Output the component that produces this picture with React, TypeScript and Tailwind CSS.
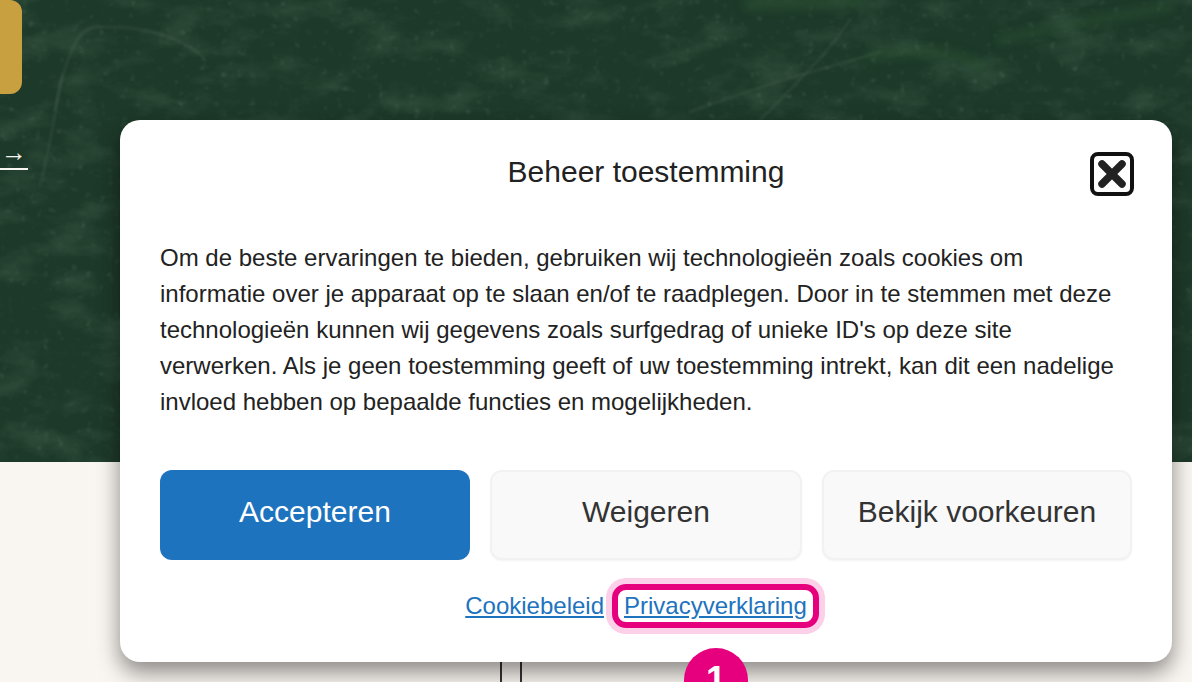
export default function App() {
  return (
    <div className="relative h-[682px] w-full overflow-hidden bg-[#f9f5f0] font-['Liberation_Sans',Arial,sans-serif]">
      {/* hero */}
      <section className="relative h-[462px] overflow-hidden bg-[#1d3929]">
        <svg className="absolute inset-0 h-full w-full" viewBox="0 0 1192 462" preserveAspectRatio="none" aria-hidden="true">
          <defs>
            <filter id="cloud" x="0" y="0" width="100%" height="100%">
              <feTurbulence type="fractalNoise" baseFrequency="0.02 0.035" numOctaves="5" seed="11" />
              <feColorMatrix values="0 0 0 0 0.2  0 0 0 0 0.33  0 0 0 0 0.24  2.2 0 0 0 -1.0" />
            </filter>
            <filter id="speck" x="0" y="0" width="100%" height="100%">
              <feTurbulence type="fractalNoise" baseFrequency="0.14" numOctaves="3" seed="4" />
              <feColorMatrix values="0 0 0 0 0.5  0 0 0 0 0.62  0 0 0 0 0.52  5 0 0 0 -3.3" />
              <feGaussianBlur stdDeviation="0.8" />
            </filter>
            <filter id="soft"><feGaussianBlur stdDeviation="5" /></filter>
            <filter id="softer"><feGaussianBlur stdDeviation="1.2" /></filter>
          </defs>
          <rect width="1192" height="462" filter="url(#cloud)" opacity="0.2" />
          <rect width="1192" height="462" filter="url(#speck)" opacity="0.14" />
          <g fill="none" stroke="#2f5534" strokeLinecap="round" filter="url(#soft)" opacity="0.6">
            <path d="M750 4 L860 0" strokeWidth="12" />
            <path d="M870 56 C 940 45 970 60 985 68" strokeWidth="9" />
            <path d="M1000 40 C 1060 25 1110 18 1170 6" strokeWidth="7" />
          </g>
          <g fill="none" stroke="#b9cdbb" strokeOpacity="0.07" strokeLinecap="round" strokeWidth="3" filter="url(#softer)">
            <path d="M55 110 C 65 60 75 35 90 28 C 150 22 195 45 205 60" />
            <path d="M40 185 C 50 150 55 110 62 75" />
            <path d="M690 112 C 760 85 820 70 880 52" />
            <path d="M760 120 C 800 80 830 50 850 20" />
          </g>
        </svg>
        <div className="relative">
          <div className="h-[94px] w-[22px] rounded-r-xl bg-[#c9a03f]" />
          <div className="mt-[50px] h-[26px] w-[28px] border-b-2 border-[#f9f5f0] pl-[1px] text-[26px] leading-[16px] text-[#f9f5f0]">→</div>
        </div>
      </section>

      {/* lower page */}
      <section className="flex h-[220px] items-end pl-[500px]">
        <div className="h-[40px] w-[22px] border-x-2 border-[#333333]" />
      </section>

      {/* consent dialog */}
      <div className="absolute left-[120px] top-[120px] h-[542px] w-[1052px] rounded-[20px] bg-white px-[40px] pt-[32px] shadow-[0_10px_22px_rgba(0,0,0,0.45)]">
        <header className="relative flex h-[44px] items-center justify-center">
          <h2 className="mb-[4px] text-[30px] font-normal leading-[40px] text-[#222222]">Beheer toestemming</h2>
          <button className="absolute right-[-2px] top-0 flex h-[44px] w-[44px] items-center justify-center rounded-[8px] border-[4px] border-[#111111] bg-white" aria-label="Sluiten">
            <svg width="30" height="30" viewBox="0 0 30 30" fill="none" stroke="#222222" strokeWidth="7.5" strokeLinecap="round" aria-hidden="true">
              <path d="M5 5 L25 25 M25 5 L5 25" />
            </svg>
          </button>
        </header>

        <p className="mt-[44px] w-[972px] text-[24px] leading-[36px] text-[#222222]">
          Om de beste ervaringen te bieden, gebruiken wij technologieën zoals cookies om informatie over je apparaat op te slaan en/of te raadplegen. Door in te stemmen met deze technologieën kunnen wij gegevens zoals surfgedrag of unieke ID's op deze site verwerken. Als je geen toestemming geeft of uw toestemming intrekt, kan dit een nadelige invloed hebben op bepaalde functies en mogelijkheden.
        </p>

        <div className="mt-[50px] grid grid-cols-[310px_312px_310px] gap-[20px]">
          <button className="h-[90px] rounded-[12px] bg-[#1e73be] pb-[8px] text-[30px] text-white">Accepteren</button>
          <button className="h-[90px] rounded-[12px] border-2 border-[#f2f2f2] bg-[#f9f9f9] pb-[8px] text-[30px] text-[#333333] shadow-[0_1px_2px_rgba(0,0,0,0.05)]">Weigeren</button>
          <button className="h-[90px] rounded-[12px] border-2 border-[#f2f2f2] bg-[#f9f9f9] pb-[8px] text-[30px] text-[#333333] shadow-[0_1px_2px_rgba(0,0,0,0.05)]">Bekijk voorkeuren</button>
        </div>

        <div className="mt-[28px] flex justify-center gap-[20px] pr-[20px] text-[24px] leading-[36px] text-[#1e73be]">
          <a className="underline" href="#">Cookiebeleid</a>
          <span className="relative">
            <a className="underline" href="#">Privacyverklaring</a>
            <span className="absolute inset-x-[-12px] inset-y-[-4px] rounded-[14px] border-[6px] border-[#e6007e] shadow-[0_0_0_6px_#fbd0e8]" />
          </span>
        </div>
      </div>

      {/* step marker */}
      <div className="absolute left-[684px] top-[648px] flex h-[64px] w-[64px] items-center justify-center rounded-full bg-[#e6007e] text-[36px] font-bold leading-none text-white">1</div>
    </div>
  );
}
